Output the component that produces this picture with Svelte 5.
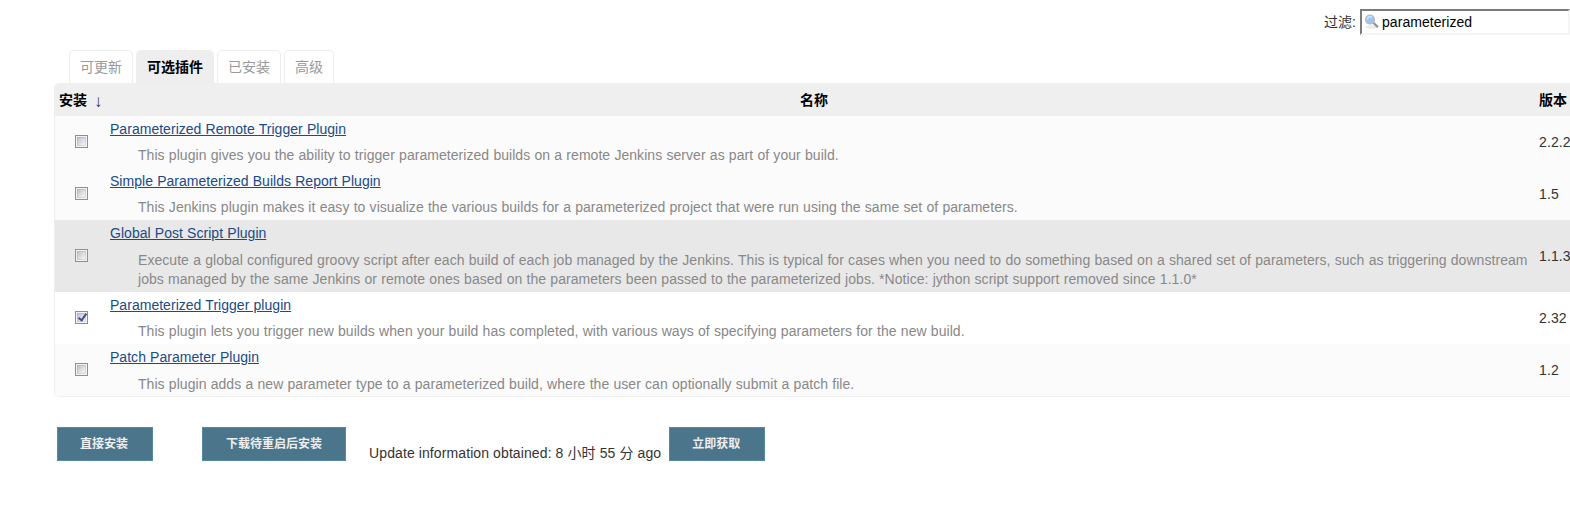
<script lang="ts">
  interface Plugin {
    name: string;
    excerpt: string;
    version: string;
    checked?: boolean;
    state?: "hover" | "selected";
  }

  const tabs = ["可更新", "可选插件", "已安装", "高级"];
  let activeTab = $state("可选插件");
  let filter = $state("parameterized");

  let plugins: Plugin[] = $state([
    {
      name: "Parameterized Remote Trigger Plugin",
      excerpt: "This plugin gives you the ability to trigger parameterized builds on a remote Jenkins server as part of your build.",
      version: "2.2.2",
    },
    {
      name: "Simple Parameterized Builds Report Plugin",
      excerpt: "This Jenkins plugin makes it easy to visualize the various builds for a parameterized project that were run using the same set of parameters.",
      version: "1.5",
    },
    {
      name: "Global Post Script Plugin",
      excerpt: "Execute a global configured groovy script after each build of each job managed by the Jenkins. This is typical for cases when you need to do something based on a shared set of parameters, such as triggering downstream jobs managed by the same Jenkins or remote ones based on the parameters been passed to the parameterized jobs. *Notice: jython script support removed since 1.1.0*",
      version: "1.1.3",
      state: "hover",
    },
    {
      name: "Parameterized Trigger plugin",
      excerpt: "This plugin lets you trigger new builds when your build has completed, with various ways of specifying parameters for the new build.",
      version: "2.32",
      checked: true,
      state: "selected",
    },
    {
      name: "Patch Parameter Plugin",
      excerpt: "This plugin adds a new parameter type to a parameterized build, where the user can optionally submit a patch file.",
      version: "1.2",
    },
  ]);
</script>

<div class="page">
  <div class="filter">
    <label for="filter-box">过滤:</label>
    <div class="filter-box">
      <svg width="16" height="16" viewBox="0 0 16 16" fill="none">
        <ellipse cx="7.5" cy="13" rx="6" ry="1.8" fill="#ebebeb" />
        <path d="m9.6 9 3.8 3.6" stroke="#929292" stroke-width="2.2" stroke-linecap="round" />
        <circle cx="6" cy="5.6" r="4.4" fill="#9fc5f0" stroke="#b3b9c4" stroke-width="1.2" />
        <path d="M3.4 5.4a2.7 2.7 0 0 1 4.6-2" stroke="#d9e9fb" stroke-width="1.3" />
      </svg>
      <input id="filter-box" type="text" bind:value={filter} />
    </div>
  </div>

  <div class="tabs">
    {#each tabs as tab}
      <button class="tab" class:active={activeTab === tab} onclick={() => (activeTab = tab)}>{tab}</button>
    {/each}
  </div>

  <div class="plugins">
    <div class="row head">
      <div class="install">安装<span class="arrow">↓</span></div>
      <div class="title">名称</div>
      <div>版本</div>
    </div>
    {#each plugins as plugin}
      <div class="row {plugin.state ?? ''}">
        <div class="check"><input type="checkbox" bind:checked={plugin.checked} /></div>
        <div class="info">
          <a href="#plugin">{plugin.name}</a>
          <div class="excerpt">{plugin.excerpt}</div>
        </div>
        <div class="version">{plugin.version}</div>
      </div>
    {/each}
  </div>

  <div class="actions">
    <button class="submit">直接安装</button>
    <button class="submit restart">下载待重启后安装</button>
    <span class="updated">Update information obtained: 8 小时 55 分 ago</span>
    <button class="submit">立即获取</button>
  </div>
</div>

<style>
  :global(body) { background: #fff; overflow: hidden; }
  .page {
    width: 1570px;
    height: 518px;
    overflow: hidden;
    color: #333;
    font: 14px/19px "Liberation Sans", "Noto Sans CJK SC", sans-serif;
  }

  .filter {
    display: flex;
    justify-content: flex-end;
    align-items: center;
    gap: 4px;
    height: 26px;
    padding-top: 9px;
  }
  .filter-box {
    display: flex;
    align-items: center;
    box-sizing: border-box;
    width: 210px;
    height: 26px;
    padding-left: 2px;
    border: 2px solid;
    border-color: #7b7b7b #f5f5f5 #f5f5f5 #7b7b7b;
  }
  .filter-box input {
    flex: 1;
    min-width: 0;
    padding: 0 0 0 2px;
    border: none;
    outline: none;
    background: none;
    color: #000;
    font: inherit;
    letter-spacing: .05px;
  }

  .tabs {
    display: flex;
    gap: 3px;
    height: 33px;
    padding: 15px 0 0 69px;
  }
  .tab {
    padding: 0 10px;
    border: 1px solid #eee;
    border-bottom: none;
    border-radius: 5px 5px 0 0;
    background: #fff;
    color: #999;
    font: inherit;
    cursor: pointer;
  }
  .tab.active { background: #eee; color: #000; font-weight: bold; }

  .plugins {
    margin-left: 54px;
    border: 1px solid #eee;
    border-width: 0 0 1px 1px;
    border-radius: 5px 0 0 5px;
    overflow: hidden;
  }
  .row {
    display: grid;
    grid-template-columns: 55px 1429px 1fr;
    align-items: center;
    background: #fbfbfb;
  }
  .row.hover { background: #e8e8e8; }
  .row.selected { background: #fff; }
  .row.head {
    box-sizing: border-box;
    height: 33px;
    padding-top: 2px;
    background: #efefef;
    color: #000;
    font-weight: bold;
  }
  .install { display: flex; padding-left: 4px; white-space: nowrap; }
  .arrow { margin: 1px 0 -1px 7px; color: #333; font-size: 17px; font-weight: normal; }
  .title { padding-right: 21px; text-align: center; }
  .check { display: flex; padding: 0 0 2px 20px; }
  .check input {
    appearance: none;
    box-sizing: border-box;
    width: 13px;
    height: 13px;
    margin: 0;
    border: 1px solid #8e8f8f;
    background:
      linear-gradient(135deg, #bfc5d0, #f6f6f6) 2px 2px / 7px 7px no-repeat,
      linear-gradient(135deg, #aeb3b9, #e0e2e4) 1px 1px / 9px 9px no-repeat,
      #f4f4f4;
    position: relative;
  }
  .check input:checked::after {
    content: "";
    position: absolute;
    left: 4px;
    top: 0;
    width: 3px;
    height: 7px;
    border: solid #3c4f94;
    border-width: 0 2px 2px 0;
    transform: rotate(35deg);
  }
  .info {
    padding: 4px 0 2.69px;
    line-height: 19.3px;
    letter-spacing: .05px;
    word-spacing: .25px;
  }
  .info a {
    display: block;
    width: fit-content;
    color: #204a87;
    letter-spacing: .03px;
    text-decoration: underline;
  }
  .excerpt { padding: 6.95px 2px 0 28px; color: #888; }
  .row:last-child .info { padding-bottom: 2.19px; }
  .row:last-child .excerpt { padding-top: 7.45px; }
  .version { letter-spacing: .1px; }

  .actions { display: flex; padding: 30px 0 0 57px; }
  .submit {
    height: 34px;
    padding: 0 24px 0 22px;
    border: 1px solid #5788a1;
    background: #4b758b;
    color: #eee;
    font: bold 12px/1 "Liberation Sans", "Noto Sans CJK SC", sans-serif;
    cursor: pointer;
  }
  .restart { margin-left: 49px; padding: 0 23px; }
  .updated { margin: 17px 8px 0 23px; letter-spacing: .1px; white-space: nowrap; }
</style>
